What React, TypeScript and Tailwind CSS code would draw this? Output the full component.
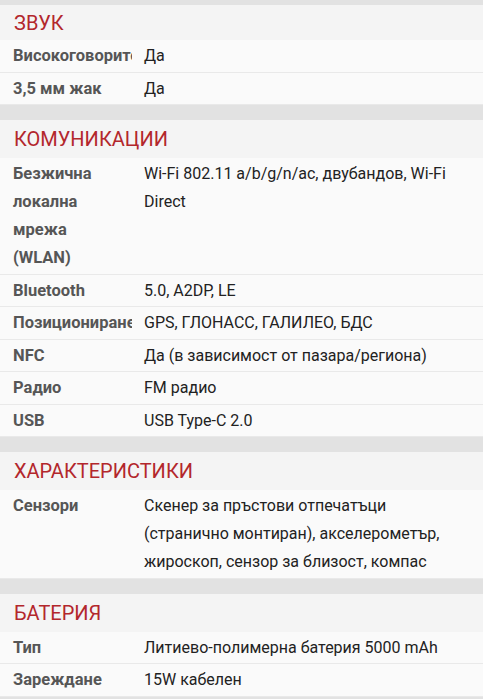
/* ── Spec sheet sections ─────────────────────────────── */
const SECTIONS = [
  {
    title: "ЗВУК",
    rows: [
      ["Високоговорител", "Да"],
      ["3,5 мм жак", "Да"],
    ],
  },
  {
    title: "КОМУНИКАЦИИ",
    rows: [
      ["Безжична локална мрежа (WLAN)", "Wi-Fi 802.11 a/b/g/n/ac, двубандов, Wi-Fi Direct"],
      ["Bluetooth", "5.0, A2DP, LE"],
      ["Позициониране", "GPS, ГЛОНАСС, ГАЛИЛЕО, БДС"],
      ["NFC", "Да (в зависимост от пазара/региона)"],
      ["Радио", "FM радио"],
      ["USB", "USB Type-C 2.0"],
    ],
  },
  {
    title: "ХАРАКТЕРИСТИКИ",
    rows: [
      ["Сензори", "Скенер за пръстови отпечатъци (странично монтиран), акселерометър, жироскоп, сензор за близост, компас"],
    ],
  },
  {
    title: "БАТЕРИЯ",
    rows: [
      ["Тип", "Литиево-полимерна батерия 5000 mAh"],
      ["Зареждане", "15W кабелен"],
    ],
  },
];

function Section({ title, rows, first }: { title: string; rows: string[][]; first?: boolean }) {
  return (
    <div>
      <div className={first ? "h-[5px] bg-[#e2e2e2]" : "h-[15px] bg-[#e2e2e2]"} />
      <div
        className={
          "bg-[#f4f4f4] pl-[14px] flex items-center text-[20px] text-[#b3272c] " +
          (first ? "h-[35px]" : "h-[38px]")
        }
      >
        {title}
      </div>
      {rows.map(([label, value], i) => (
        <div
          key={i}
          className="flex bg-[#fafafa] pt-[2px] pb-[1.5px] leading-[28px] border-b border-[#e9e9e9]"
        >
          <div className="w-[132px] shrink-0 pl-[13px] pr-[14px] overflow-hidden text-[16.5px] font-bold text-[#565656]">
            {label}
          </div>
          <div className="flex-1 pl-[12px] pr-[10px] text-[16px] text-[#222222]">{value}</div>
        </div>
      ))}
    </div>
  );
}

export default function App() {
  return (
    <div
      className="w-[483px] h-[699px] overflow-hidden bg-[#e2e2e2]"
      style={{ fontFamily: "Roboto, 'Noto Sans', sans-serif" }}
    >
      {SECTIONS.map((s, i) => (
        <Section key={s.title} title={s.title} rows={s.rows} first={i === 0} />
      ))}
    </div>
  );
}
